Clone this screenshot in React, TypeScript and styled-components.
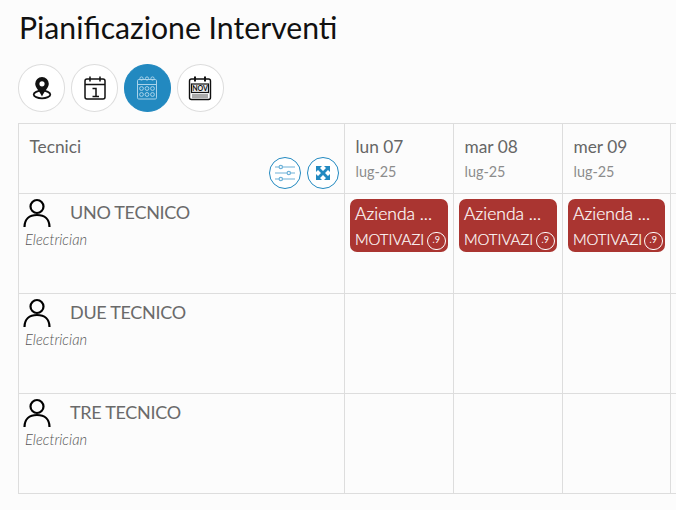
import React from "react";
import styled, { createGlobalStyle } from "styled-components";

const Global = createGlobalStyle`
  html, body { margin: 0; padding: 0; height: 100%; overflow: hidden; background: #fcfcfc; }
  body { font-family: Lato, "Open Sans", sans-serif; color: #555; }
`;
const Page = styled.div`
  width: 676px; height: 510px; overflow: hidden; padding: 9px 0 0 18px; box-sizing: border-box;
`;
const Title = styled.h1`
  margin: 0 0 19px 1px; font-size: 30.2px; line-height: 36px; font-weight: 400; color: #111; height: 36px;
`;
const Toolbar = styled.div`
  display: flex; gap: 5.5px; height: 47.5px; margin-bottom: 11.5px;
`;
const RoundButton = styled.button<{ $active?: boolean }>`
  width: 47.4px; height: 47.5px; padding: 0; border-radius: 50%; box-sizing: border-box;
  display: flex; align-items: center; justify-content: center;
  background: ${p => (p.$active ? "#2289c0" : "#fff")};
  border: 1px solid ${p => (p.$active ? "#2289c0" : "#ddd")};
  color: ${p => (p.$active ? "#a9d3ea" : "#111")};
`;
const Grid = styled.div`
  display: grid; grid-template-columns: 326px 109px 109px 108px 200px;
  grid-template-rows: 70px 100px 100px 100px; width: 852px;
  border-top: 1px solid #ddd; border-left: 1px solid #ddd;
`;
const Cell = styled.div`
  border-right: 1px solid #ddd; border-bottom: 1px solid #ddd; box-sizing: border-box;
  min-width: 0; position: relative;
`;
const HeadCell = styled(Cell)`
  padding: 12px 10px 0 10.5px; display: flex; flex-direction: column;
`;
const TechHead = styled(Cell)`
  padding: 12px 5px 0 10.5px; display: flex; flex-direction: column;
`;
const HeadLabel = styled.div`
  font-size: 17.3px; line-height: 22px; font-weight: 400; color: #666;
`;
const Tools = styled.div`
  display: flex; justify-content: flex-end; gap: 6px; margin-top: -1px;
`;
const SmallRound = styled.button`
  width: 32px; height: 32px; padding: 0; border-radius: 50%; box-sizing: border-box; background: #fff;
  border: 1px solid #2289c0; color: #2289c0; display: flex; align-items: center; justify-content: center;
`;
const DaySub = styled.div`
  font-size: 14.4px; line-height: 18px; margin-top: 5px; font-weight: 400; color: #8c8c8c;
`;
const TechCell = styled(Cell)`
  padding: 4px 0 0 4px;
`;
const TechRow = styled.div`
  display: flex; align-items: flex-start; height: 30px;
`;
const TechName = styled.div`
  font-size: 18px; line-height: 22px; font-weight: 400; color: #6a6a6a; margin: 3px 0 0 19px; letter-spacing: -0.3px;
`;
const Role = styled.div`
  font-size: 14.7px; line-height: 16px; font-style: italic; font-weight: 300; color: #555; margin: 3px 0 0 2px;
`;
const Event = styled.div`
  margin: 5px 5px 0 5px; height: 53px; border-radius: 7px; background: #aa3531; color: #fff;
  padding: 3px 5px 0 5px; box-sizing: border-box; position: relative;
`;
const EventTitle = styled.div`
  font-size: 17.5px; line-height: 24px; font-weight: 300; white-space: nowrap; -webkit-text-stroke: 0.2px #fff;
`;
const EventReason = styled.div`
  font-size: 15px; line-height: 20px; margin-top: 3px; font-weight: 300; white-space: nowrap; -webkit-text-stroke: 0.2px #fff;
`;
const Badge = styled.span`
  position: absolute; right: 2.5px; bottom: 2px; width: 18.5px; height: 18.5px; border-radius: 50%;
  border: 1px solid #fff; box-sizing: border-box; color: #fff;
  font-size: 9px; line-height: 14px; text-align: center; font-weight: 400;
`;

const PinIcon = () => (
  <svg width="20" height="24" viewBox="0 0 20 24" fill="none">
    <ellipse cx="10" cy="18.500" rx="8.300" ry="3.800" stroke="currentColor" strokeWidth="1.800" />
    <path d="M10 1a6.800 6.800 0 0 0-6.800 6.800C3.200 12 8 15.500 10 20.500c2-5 6.800-8.500 6.800-12.700A6.800 6.800 0 0 0 10 1z" fill="currentColor" />
    <circle cx="10" cy="7.800" r="2.600" fill="#fff" />
  </svg>
);
const DayIcon = () => (
  <svg width="24" height="26" viewBox="0 0 24 26" fill="none" stroke="currentColor" strokeWidth="1.500">
    <rect x="2" y="4" width="20" height="20" rx="2" />
    <path d="M2 9.500h20M7 1.500v5M17 1.500v5" />
    <path d="M9.500 13.500h3.500v8M9.500 21.500h6.500" strokeWidth="1.500" />
  </svg>
);
const MonthIcon = () => (
  <svg width="24" height="26" viewBox="0 0 24 26" fill="none" stroke="currentColor" strokeWidth="1">
    <rect x="2.500" y="4.500" width="19" height="19.500" rx="1.200" />
    <path d="M2.500 9.500h19" />
    <circle cx="6.500" cy="3.500" r="1.600" /><circle cx="12" cy="3.500" r="1.600" /><circle cx="17.500" cy="3.500" r="1.600" />
    {[13.5, 19.5].map(y => [6.5, 12, 17.5].map(x => <circle key={`${x}-${y}`} cx={x} cy={y} r="1.900" />))}
  </svg>
);
const NovIcon = () => (
  <svg width="26" height="26" viewBox="0 0 26 26" fill="none" stroke="currentColor">
    <rect x="2.500" y="4" width="21" height="20.500" rx="2" strokeWidth="1.400" />
    <path d="M8 1.500v5M18 1.500v5" strokeWidth="2" />
    <rect x="4.500" y="9" width="17" height="8.500" strokeWidth="1.200" fill="#eee" />
    <text x="13" y="16" textAnchor="middle" fontSize="7" fontWeight="700" fontFamily="Lato, sans-serif" fill="currentColor" stroke="none">NOV</text>
    <path d="M5 20h16M5 22h16" strokeWidth="1" stroke="#555" />
  </svg>
);
const SlidersIcon = () => (
  <svg width="22" height="18" viewBox="0 0 22 18" fill="none" stroke="#6eb2d8" strokeWidth="1.200">
    <path d="M1 3h4M8.500 3h12.500M1 9h12M16.500 9h4.500M1 15h4M8.500 15h12.500" />
    <circle cx="6.800" cy="3" r="1.700" /><circle cx="14.800" cy="9" r="1.700" /><circle cx="6.800" cy="15" r="1.700" />
  </svg>
);
const ExpandIcon = () => (
  <svg width="16" height="16" viewBox="0 0 16 16" fill="currentColor">
    <path d="M1 1h6L5 3 8 6l3-3-2-2h6v6l-2-2-3 3 3 3 2-2v6H9l2-2-3-3-3 3 2 2H1V9l2 2 3-3-3-3-2 2z" />
  </svg>
);
const PersonIcon = () => (
  <svg width="28" height="30" viewBox="0 0 28 30" fill="none" stroke="#000" strokeWidth="2.200">
    <circle cx="14" cy="8.500" r="6.500" />
    <path d="M1.500 29c0-8 5-12 12.500-12s12.500 4 12.500 12" />
  </svg>
);

const days = [{ d: "lun 07" }, { d: "mar 08" }, { d: "mer 09" }];
const techs = ["UNO TECNICO", "DUE TECNICO", "TRE TECNICO"];

export default function App() {
  return (
    <Page>
      <Global />
      <Title>Pianificazione Interventi</Title>
      <Toolbar>
        <RoundButton><PinIcon /></RoundButton>
        <RoundButton><DayIcon /></RoundButton>
        <RoundButton $active><MonthIcon /></RoundButton>
        <RoundButton><NovIcon /></RoundButton>
      </Toolbar>
      <Grid>
        <TechHead>
          <HeadLabel>Tecnici</HeadLabel>
          <Tools>
            <SmallRound><SlidersIcon /></SmallRound>
            <SmallRound><ExpandIcon /></SmallRound>
          </Tools>
        </TechHead>
        {days.map(x => (
          <HeadCell key={x.d}>
            <HeadLabel>{x.d}</HeadLabel>
            <DaySub>lug-25</DaySub>
          </HeadCell>
        ))}
        <HeadCell />
        {techs.map((t, i) => (
          <React.Fragment key={t}>
            <TechCell>
              <TechRow>
                <PersonIcon />
                <TechName>{t}</TechName>
              </TechRow>
              <Role>Electrician</Role>
            </TechCell>
            {days.map(x => (
              <Cell key={x.d}>
                {i === 0 && (
                  <Event>
                    <EventTitle>Azienda ...</EventTitle>
                    <EventReason>MOTIVAZI</EventReason>
                    <Badge>.9</Badge>
                  </Event>
                )}
              </Cell>
            ))}
            <Cell />
          </React.Fragment>
        ))}
      </Grid>
    </Page>
  );
}
